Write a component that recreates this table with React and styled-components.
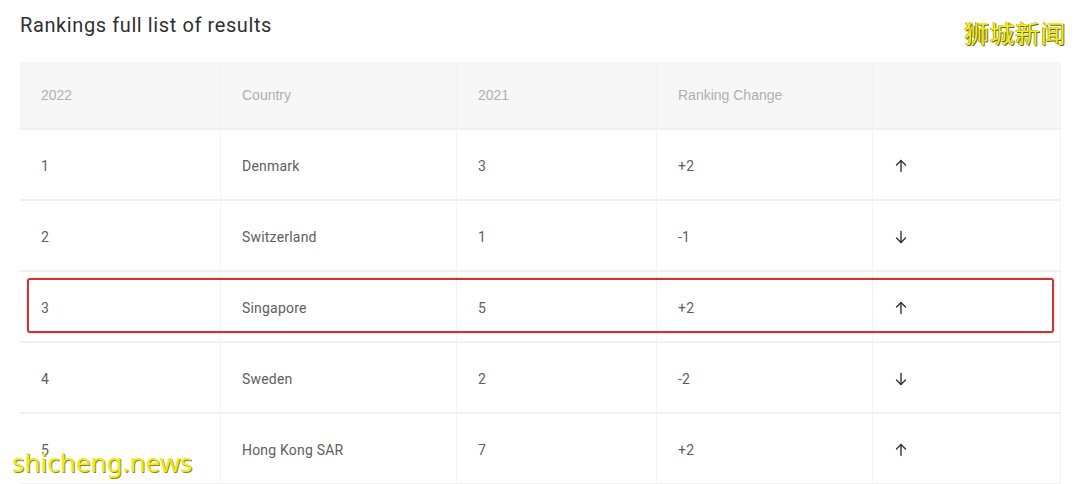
import React from 'react';
import styled, { createGlobalStyle } from 'styled-components';

const GlobalStyle = createGlobalStyle`
  html, body {
    margin: 0;
    padding: 0;
    background: #ffffff;
  }
  body {
    font-family: 'Roboto', 'Liberation Sans', sans-serif;
    overflow: hidden;
  }
`;

const Page = styled.div`
  position: relative;
  width: 1080px;
  height: 484px;
  overflow: hidden;
  padding: 12px 19px 0 20px;
  box-sizing: border-box;
`;

const Title = styled.h2`
  margin: 0 0 24px;
  font-family: 'Roboto', sans-serif;
  font-weight: 400;
  font-size: 20px;
  line-height: 26px;
  color: #2f2f2f;
  letter-spacing: 0.6px;
`;

const Table = styled.div`
  display: grid;
  grid-template-columns: 201px 236px 200px 216px 188px;
`;

const Row = styled.div`
  display: contents;
`;

const Cell = styled.div`
  box-sizing: border-box;
  height: ${p => (p.$head ? 68 : 71)}px;
  display: flex;
  align-items: center;
  padding-left: 21px;
  padding-top: ${p => (p.$head ? 0 : 2)}px;
  background: ${p => (p.$head ? '#f7f7f7' : '#ffffff')};
  border-bottom: 2px solid #f0f0f0;
  border-right: 1px solid #f3f3f3;
  font-family: ${p => (p.$head ? "'Liberation Sans', Arial, sans-serif" : "'Roboto', sans-serif")};
  font-size: 14px;
  color: ${p => (p.$head ? '#b0b0b0' : '#5e5e5e')};
  letter-spacing: ${p => (p.$head ? 0 : 0.2)}px;
`;

const Highlight = styled.div`
  position: absolute;
  left: 27px;
  top: 278px;
  width: 1023px;
  height: 51px;
  border: 2.5px solid #c8362f;
  border-radius: 3px;
  box-shadow: 0 0 2px rgba(200, 54, 47, 0.45);
  pointer-events: none;
`;

const WatermarkCn = styled.div`
  position: absolute;
  right: 14px;
  top: 14px;
  font-family: 'Noto Sans CJK SC', sans-serif;
  font-size: 25px;
  letter-spacing: 0.5px;
  color: #f2ee1c;
  text-shadow: 1px 1px 0 #6a6a10, -0.5px -0.5px 0 #8a8a20;
`;

const WatermarkEn = styled.div`
  position: absolute;
  left: 12px;
  top: 446px;
  font-family: 'Noto Sans', sans-serif;
  font-size: 26px;
  line-height: 32px;
  color: #eeea1a;
  text-shadow: 1px 1px 0 #8a8a10;
`;

const ArrowIcon = ({ down }) => (
  <svg width="14" height="14" viewBox="0 0 14 14" fill="none" stroke="#333" strokeWidth="1.4" strokeLinecap="round" strokeLinejoin="round">
    {down ? (
      <>
        <path d="M7 1.5v11" />
        <path d="M2.5 8l4.5 4.5L11.5 8" />
      </>
    ) : (
      <>
        <path d="M7 12.5v-11" />
        <path d="M2.5 6L7 1.5 11.5 6" />
      </>
    )}
  </svg>
);

const rows = [
  ['1', 'Denmark', '3', '+2', false],
  ['2', 'Switzerland', '1', '-1', true],
  ['3', 'Singapore', '5', '+2', false],
  ['4', 'Sweden', '2', '-2', true],
  ['5', 'Hong Kong SAR', '7', '+2', false],
];

export default function App() {
  return (
    <>
      <GlobalStyle />
      <Page>
        <Title>Rankings full list of results</Title>
        <Table>
          <Row>
            <Cell $head>2022</Cell>
            <Cell $head>Country</Cell>
            <Cell $head>2021</Cell>
            <Cell $head>Ranking Change</Cell>
            <Cell $head />
          </Row>
          {rows.map(([rank, country, prev, change, down]) => (
            <Row key={rank}>
              <Cell>{rank}</Cell>
              <Cell>{country}</Cell>
              <Cell>{prev}</Cell>
              <Cell>{change}</Cell>
              <Cell>
                <ArrowIcon down={down} />
              </Cell>
            </Row>
          ))}
        </Table>
        <Highlight />
        <WatermarkCn>狮城新闻</WatermarkCn>
        <WatermarkEn>shicheng.news</WatermarkEn>
      </Page>
    </>
  );
}
